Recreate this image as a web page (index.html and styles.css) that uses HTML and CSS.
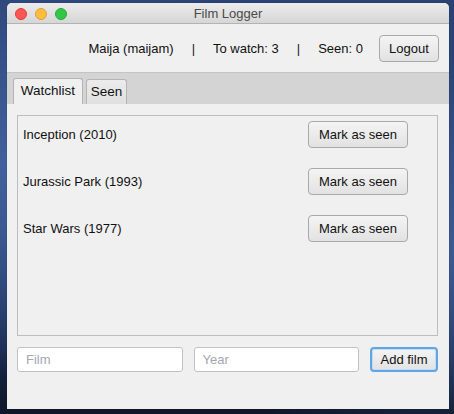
FILE: index.html
```html
<!DOCTYPE html>
<html>
<head>
<meta charset="utf-8">
<title>Film Logger</title>
<link rel="stylesheet" href="styles.css">
</head>
<body>
<div class="desktop">
  <div class="window">
    <div class="titlebar">
      <div class="lights">
        <span class="light red"></span>
        <span class="light yellow"></span>
        <span class="light green"></span>
      </div>
      <div class="title">Film Logger</div>
    </div>
    <div class="header">
      <span class="info">Maija (maijam)</span>
      <span class="sep">|</span>
      <span class="info">To watch: 3</span>
      <span class="sep">|</span>
      <span class="info">Seen: 0</span>
      <button class="btn logout">Logout</button>
    </div>
    <div class="tabbar">
      <div class="tab tab-watchlist active">Watchlist</div>
      <div class="tab tab-seen">Seen</div>
    </div>
    <div class="content">
      <div class="panel">
        <div class="row"><span class="film">Inception (2010)</span><button class="btn mark">Mark as seen</button></div>
        <div class="row"><span class="film">Jurassic Park (1993)</span><button class="btn mark">Mark as seen</button></div>
        <div class="row"><span class="film">Star Wars (1977)</span><button class="btn mark">Mark as seen</button></div>
      </div>
      <div class="form">
        <input class="field" type="text" placeholder="Film">
        <input class="field" type="text" placeholder="Year">
        <button class="btn add">Add film</button>
      </div>
    </div>
  </div>
</div>
</body>
</html>
```

FILE: styles.css
```css
* { box-sizing: border-box; }
html, body { margin: 0; padding: 0; }
body {
  width: 454px;
  height: 414px;
  overflow: hidden;
  font-family: "Liberation Sans", Arial, sans-serif;
  font-size: 13px;
  color: #111;
}
.desktop {
  width: 454px;
  height: 414px;
  padding: 3px 5px 5px 7px;
  background:
    radial-gradient(ellipse at 0% 40%, #42609c 0%, rgba(66,96,156,0) 60%),
    radial-gradient(ellipse at 100% 60%, #3c5a92 0%, rgba(60,90,146,0) 55%),
    linear-gradient(180deg, #2a4274 0%, #2b4579 55%, #18284a 85%, #0e1628 100%);
}
.window {
  width: 442px;
  height: 406px;
  background: #f0f0f0;
  border-radius: 5px 5px 0 0;
  overflow: hidden;
  display: flex;
  flex-direction: column;
  box-shadow: 0 0 1px rgba(0,0,0,0.5);
}
.titlebar {
  height: 21px;
  flex: none;
  position: relative;
  background: linear-gradient(180deg, #ececec 0%, #d6d6d6 100%);
  border-bottom: 1px solid #b3b3b3;
  display: flex;
  align-items: center;
  justify-content: center;
}
.lights {
  position: absolute;
  left: 8px;
  top: 5px;
  display: flex;
  gap: 8px;
}
.light {
  width: 12px;
  height: 12px;
  border-radius: 50%;
  display: block;
}
.red { background: #fc5753; border: 1px solid #df3d38; }
.yellow { background: #fdbc40; border: 1px solid #de9f34; }
.green { background: #33c748; border: 1px solid #27aa35; }
.title {
  color: #4a4a4a;
  font-size: 13px;
  line-height: 21px;
}
.header {
  height: 48px;
  flex: none;
  display: flex;
  align-items: center;
  justify-content: flex-end;
  padding-right: 10px;
  gap: 18px;
}
.sep { color: #222; }
.btn {
  font-family: "Liberation Sans", Arial, sans-serif;
  font-size: 13px;
  color: #111;
  background: linear-gradient(180deg, #f4f4f4 0%, #e2e2e2 100%);
  border: 1px solid #a9a9a9;
  border-radius: 4px;
  padding: 0;
  height: 27px;
}
.logout { width: 60px; margin-left: -2px; }
.tabbar {
  height: 32px;
  flex: none;
  background: #d4d4d4;
  border-top: 1px solid #c4c4c4;
  display: flex;
  align-items: flex-end;
  padding-left: 6px;
  gap: 3px;
}
.tab {
  height: 26px;
  line-height: 24px;
  text-align: center;
  border: 1px solid #b4b4b4;
  border-bottom: none;
  border-radius: 3px 3px 0 0;
  font-size: 13.5px;
}
.tab-watchlist { width: 70px; }
.tab-seen { width: 41px; height: 25px; line-height: 23px; }
.tab.active { background: #f0f0f0; }
.tab-seen { background: linear-gradient(180deg, #ececec 0%, #e0e0e0 100%); }
.content {
  flex: 1;
  display: flex;
  flex-direction: column;
  padding: 11px 11px 0 10px;
  gap: 11px;
}
.panel {
  height: 221px;
  border: 1px solid #bdbdbd;
  padding: 5px 29px 0 5px;
  display: flex;
  flex-direction: column;
  gap: 21px;
}
.row {
  display: flex;
  justify-content: space-between;
  align-items: center;
  height: 26px;
}
.film { font-size: 13px; }
.mark { width: 100px; height: 27px; }
.form {
  display: flex;
  gap: 11px;
  height: 25px;
}
.field {
  flex: 1;
  min-width: 0;
  height: 25px;
  border: 1px solid #c2c2c2;
  border-radius: 3px;
  background: #fff;
  font-family: "Liberation Sans", Arial, sans-serif;
  font-size: 13px;
  padding: 0 8px;
  outline: none;
}
.field::placeholder { color: #a3a7b4; }
.add {
  width: 68px;
  height: 25px;
  border: 2px solid #5ea6e8;
  border-radius: 4px;
  box-shadow: inset 0 0 0 1px #c5dcef;
}
```
